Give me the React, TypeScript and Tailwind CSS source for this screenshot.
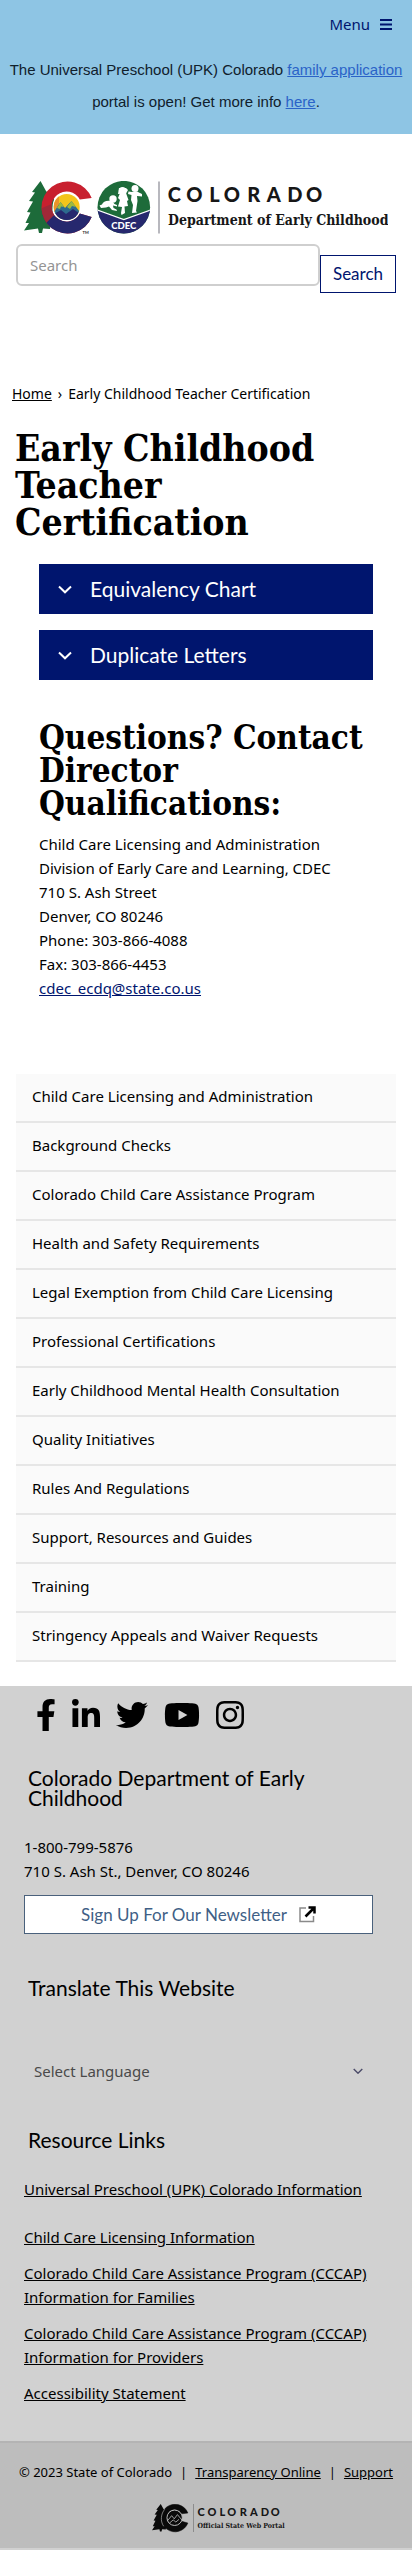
import { FaFacebookF, FaInstagram, FaLinkedinIn, FaTwitter, FaYoutube } from "react-icons/fa";

const navItems = [
  "Child Care Licensing and Administration",
  "Background Checks",
  "Colorado Child Care Assistance Program",
  "Health and Safety Requirements",
  "Legal Exemption from Child Care Licensing",
  "Professional Certifications",
  "Early Childhood Mental Health Consultation",
  "Quality Initiatives",
  "Rules And Regulations",
  "Support, Resources and Guides",
  "Training",
  "Stringency Appeals and Waiver Requests",
];

const socials = [
  { label: "Facebook", Icon: FaFacebookF, width: "w-5" },
  { label: "LinkedIn", Icon: FaLinkedinIn, width: "w-7" },
  { label: "Twitter", Icon: FaTwitter, width: "w-8" },
  { label: "YouTube", Icon: FaYoutube, width: "w-9" },
  { label: "Instagram", Icon: FaInstagram, width: "w-7" },
];

const C_PATH = "M67.7 17 A26 26 0 1 0 67.7 36 L55.8 32.5 A15 15 0 1 1 55.8 18.5 Z";
const TREE_PATH =
  "M16.5 0 L8 11 L11 11.5 L5 20 L9 20.5 L3 31 L6.5 31.5 L1.5 42 L5 42 L0 49.5 L14 47.5 L15 52 L18 52 L19 47.5 L26 48 L30 18 L22 10 Z";

function DepartmentLogo() {
  return (
    <svg viewBox="0 0 364 54" className="block w-full" role="img" aria-label="Colorado Department of Early Childhood">
      <defs>
        <clipPath id="letter-c">
          <path d={C_PATH} />
        </clipPath>
        <clipPath id="sun">
          <circle cx="42.7" cy="26" r="13" />
        </clipPath>
        <clipPath id="seal">
          <circle cx="99.8" cy="26.2" r="26.3" />
        </clipPath>
      </defs>
      <path d={TREE_PATH} fill="#1d6b3a" />
      <g clipPath="url(#letter-c)">
        <rect x="16" y="-1" width="60" height="56" fill="#c8202f" />
        <path d="M16 30 L30 33 L26 54 L16 54 Z" fill="#5e2a54" />
        <path d="M20 44 L31 33 L56 32 L76 26 L76 56 L16 56 Z" fill="#26286e" />
        <path d="M16 28 L30 22 L30 34 L22 42 Z" fill="#a02838" />
      </g>
      <circle cx="42.7" cy="26" r="14.2" fill="#fff" />
      <g clipPath="url(#sun)">
        <rect x="29" y="12" width="28" height="28" fill="#f3c51b" />
        <path d="M29 12 L35 14 L35 26 L29 32 Z" fill="#e8942a" />
        <path d="M28 34 L36.5 21 L41 27 L47.5 20 L58 34 L58 41 L28 41 Z" fill="#2d6b8e" />
        <path d="M33 27 L36.5 21 L40 26 L37 25.5 L36 28 Z M43 26 L47.5 20 L52 26 L48 25 L46 28 Z" fill="#9dbb3c" />
        <path d="M28 34 L37 29 L42 33 L49 28 L58 34 L58 41 L28 41 Z" fill="#26286e" />
      </g>
      <text x="58.5" y="52.5" fontSize="4" className="fill-neutral-800 font-['Lato'] font-bold">
        TM
      </text>
      <g clipPath="url(#seal)">
        <rect x="73" y="-1" width="54" height="55" fill="#1d6b3a" />
        <path d="M72 28.5 L99.8 38.5 L128 28.5 L128 54 L72 54 Z" fill="#26286e" />
        <path d="M72 28.5 L99.8 38.5 L128 28.5" fill="none" stroke="#fff" strokeWidth="1.3" />
      </g>
      <g fill="#fff">
        <circle cx="89" cy="18" r="3.7" />
        <path d="M88 20 C83 19 79 20 78 23.5 L75.5 24.5 L77 27 L82 26.5 L85 25.5 L88 29 L93 30 L92.5 28.5 L89.5 27 L89 24.5 L93 25.5 L93 24 L90.5 23 Z" />
        <circle cx="98.5" cy="9.5" r="3.6" />
        <path d="M95 7 L94 13 L102 12.5 L104 9 L102 7 Z" />
        <path d="M96 12 L102 12 L104.5 19 L103 20 L104 25 L100.5 25.5 L101 32 L97.5 34 L97 32 L98 26 L94 25.5 L96 19 L94 17 Z" />
        <circle cx="111" cy="7.5" r="3.5" />
        <path d="M108 11 L113 10.5 L118 13 L118 15.5 L113 15 L113.5 20 L112 30 L113 31.5 L108 32 L109 24 L107 19 L107.5 14 L104 13 L104.5 10.5 Z" />
      </g>
      <text x="99.8" y="47.5" textAnchor="middle" fontSize="9.5" className="fill-white font-['Lato'] font-black">
        CDEC
      </text>
      <path d="M135 .5 V52.5" stroke="#a0a0a8" strokeWidth="1.5" />
      <text x="143.8 162.3 185.2 199.8 223.2 242.8 263.2 282" y="21" fontSize="20" className="fill-neutral-900 font-['Lato'] font-black">
        COLORADO
      </text>
      <text x="144" y="43.5" fontSize="14" className="fill-neutral-900 font-['DejaVu_Serif_Condensed',serif] font-bold">
        Department of Early Childhood
      </text>
    </svg>
  );
}

function PortalLogo() {
  return (
    <svg viewBox="0 0 136 30" className="block w-34" role="img" aria-label="Colorado Official State Web Portal">
      <g transform="scale(.53)">
        <path d={TREE_PATH} fill="#0a0a0a" />
        <path d={C_PATH} fill="#0a0a0a" stroke="#0a0a0a" strokeWidth="1" />
        <circle cx="42.7" cy="26" r="14.5" fill="#0a0a0a" stroke="#bdbdbd" strokeWidth="1.8" />
        <path d="M24 10 C17 18 15 32 22 42" fill="none" stroke="#bdbdbd" strokeWidth="1.2" />
        <path d="M29 32 L37 22 L42 28 L48 20 L57 31 M33 36 L40 30 L45 34 L51 29" fill="none" stroke="#bdbdbd" strokeWidth="1.5" />
      </g>
      <path d="M41.5 0 V28" stroke="#8c8c8c" strokeWidth="1" />
      <text x="45.6 55.5 67.5 75.2 87.7 98 108.7 118.7" y="11.5" fontSize="11" className="fill-neutral-900 font-['Lato'] font-black">
        COLORADO
      </text>
      <text x="45.6" y="23.5" fontSize="7" className="fill-neutral-900 font-['DejaVu_Serif_Condensed',serif] font-bold">
        Official State Web Portal
      </text>
    </svg>
  );
}

function Chevron({ className }: { className: string }) {
  return (
    <svg viewBox="0 0 14 9" className={className} fill="none" stroke="currentColor" aria-hidden="true">
      <path d="M1 1.5 L7 7.3 L13 1.5" strokeWidth="2" />
    </svg>
  );
}

function AccordionButton({ title }: { title: string }) {
  return (
    <button
      type="button"
      aria-expanded="false"
      className="flex h-[50px] w-full items-center gap-[18px] bg-[#00156e] px-[19px] text-left font-['Lato',sans-serif] text-[21px] text-white"
    >
      <Chevron className="w-3.5" />
      <span>{title}</span>
    </button>
  );
}

const footerHeading = "px-1 font-['Lato',sans-serif] text-[21px] leading-5";

export default function App() {
  return (
    <div className="bg-white font-['Noto_Sans',sans-serif] text-[15px] leading-6 text-black">
      <header>
        <div className="bg-[#8ec5e4] px-2 pt-3 pb-4">
          <div className="flex justify-end pr-3">
            <button type="button" className="flex h-6 items-center gap-2.5 text-[#00156e]">
              Menu
              <svg viewBox="0 0 12 11" className="w-3" fill="none" stroke="currentColor" aria-hidden="true">
                <path d="M0 1 H12 M0 5.5 H12 M0 10 H12" strokeWidth="2" />
              </svg>
            </button>
          </div>
          <p className="mt-[18px] text-center font-['Liberation_Sans',sans-serif] leading-8 text-[#10202c]">
            The Universal Preschool (UPK) Colorado{" "}
            <a href="#family" className="text-[#2a63c8] underline">family application</a> portal is open! Get more info{" "}
            <a href="#info" className="text-[#2a63c8] underline">here</a>.
          </p>
        </div>
        <a href="#home" className="mt-[47px] block px-6">
          <DepartmentLogo />
        </a>
        <form className="mt-[9px] flex items-start px-4" role="search">
          <input
            type="search"
            aria-label="Search"
            placeholder="Search"
            className="h-[42px] min-w-0 flex-1 rounded-md border-2 border-[#cfcfcf] bg-white px-3 text-[15px] placeholder:text-[#949494]"
          />
          <button
            type="button"
            className="mt-[11px] h-[38px] w-[76px] border border-[#00156e] bg-white font-['Lato',sans-serif] text-[17px] text-[#00156e]"
          >
            Search
          </button>
        </form>
      </header>

      <nav aria-label="Breadcrumb" className="mt-[89px] px-3 text-sm leading-6">
        <ol className="flex gap-1.5">
          <li><a href="#home" className="underline">Home</a></li>
          <li aria-hidden="true">›</li>
          <li>Early Childhood Teacher Certification</li>
        </ol>
      </nav>

      <main>
        <h1 className="mt-6 px-[15px] font-['DejaVu_Serif_Condensed',serif] text-[37px] leading-[37px] font-bold">
          Early Childhood Teacher Certification
        </h1>
        <div className="mt-[23px] px-[39px]">
          <div className="grid gap-4">
            <AccordionButton title="Equivalency Chart" />
            <AccordionButton title="Duplicate Letters" />
          </div>
          <h2 className="mt-[41px] font-['DejaVu_Serif_Condensed',serif] text-[33px] leading-[33px] font-bold">
            Questions? Contact Director Qualifications:
          </h2>
          <address className="mt-3 not-italic">
            Child Care Licensing and Administration
            <br />
            Division of Early Care and Learning, CDEC
            <br />
            710 S. Ash Street
            <br />
            Denver, CO 80246
            <br />
            Phone: 303-866-4088
            <br />
            Fax: 303-866-4453
            <br />
            <a href="mailto:cdec_ecdq@state.co.us" className="text-[#00156e] underline">cdec_ecdq@state.co.us</a>
          </address>
        </div>
      </main>

      <nav aria-label="Section" className="mt-[74px] px-4">
        <ul className="bg-[#fafafa]">
          {navItems.map((item) => (
            <li key={item} className="border-b-2 border-[#e6e6e6]">
              <a href="#section" className="block px-4 pt-2.5 pb-[13px]">{item}</a>
            </li>
          ))}
        </ul>
      </nav>

      <footer className="mt-6 bg-[#d1d1d1]">
        <div className="px-6 pt-[13px] pb-9">
          <ul className="flex gap-4 px-3">
            {socials.map(({ label, Icon, width }) => (
              <li key={label}>
                <a href="#social" aria-label={label}>
                  <Icon className={`block h-8 ${width}`} />
                </a>
              </li>
            ))}
          </ul>
          <h2 className={`mt-[37px] ${footerHeading}`}>Colorado Department of Early Childhood</h2>
          <p className="mt-[27px]">
            1-800-799-5876
            <br />
            710 S. Ash St., Denver, CO 80246
          </p>
          <div className="pr-[15px]">
            <a
              href="#newsletter"
              className="mt-3 flex h-[39px] items-center justify-center gap-3 border border-[#4a617c] bg-white font-['Lato',sans-serif] text-[17px] text-[#3f5f86]"
            >
              Sign Up For Our Newsletter
              <svg viewBox="0 0 17 17" className="w-[17px]" fill="none" aria-hidden="true">
                <path d="M7 2 H1 V15.5 H14.5 V10" stroke="#8a8a8a" strokeWidth="1.5" />
                <path d="M6.5 10.5 L14.5 2.5 M9.5 1.5 H15.5 V7.5" stroke="#000" strokeWidth="2.5" />
              </svg>
            </a>
          </div>
          <h2 className={`mt-11 ${footerHeading}`}>Translate This Website</h2>
          <div className="relative mt-[51px] mr-[15px]">
            <select aria-label="Select Language" className="h-11 w-full appearance-none bg-transparent px-2.5 text-[#4a4a4a]">
              <option>Select Language</option>
            </select>
            <Chevron className="pointer-events-none absolute top-[19px] right-2.5 w-2.5 text-[#4a4a68]" />
          </div>
          <h2 className={`mt-[37px] ${footerHeading}`}>Resource Links</h2>
          <ul className="mt-[27px] grid gap-3 underline">
            <li className="mb-3"><a href="#upk">Universal Preschool (UPK) Colorado Information</a></li>
            <li><a href="#licensing">Child Care Licensing Information</a></li>
            <li><a href="#families">Colorado Child Care Assistance Program (CCCAP) Information for Families</a></li>
            <li><a href="#providers">Colorado Child Care Assistance Program (CCCAP) Information for Providers</a></li>
            <li><a href="#accessibility">Accessibility Statement</a></li>
          </ul>
        </div>
        <div className="flex flex-col items-center border-t-2 border-[#b4b4b4] bg-[#bdbdbd] px-3 pt-[17px] pb-3.5">
          <p className="flex gap-2 text-[13px] leading-6 whitespace-nowrap">
            <span>© 2023 State of Colorado</span>
            <span>|</span>
            <a href="#transparency" className="underline">Transparency Online</a>
            <span>|</span>
            <a href="#support" className="underline">Support</a>
          </p>
          <a href="#portal" className="mt-5 ml-7">
            <PortalLogo />
          </a>
        </div>
        <div className="h-0.5" />
      </footer>
    </div>
  );
}
